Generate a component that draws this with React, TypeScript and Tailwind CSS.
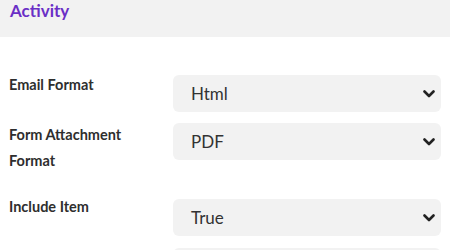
const font = { fontFamily: 'Lato, "Noto Sans", sans-serif' };

function Chevron() {
  return (
    <svg width="12" height="8" viewBox="0 0 12 8" className="shrink-0">
      <polyline points="1.5,1.5 6,6 10.5,1.5" fill="none" stroke="#222" strokeWidth="2.6" strokeLinecap="round" strokeLinejoin="round" />
    </svg>
  );
}

function SelectBox({ value }: { value?: string }) {
  return (
    <div className="w-[268px] h-[37px] bg-[#f2f2f2] rounded-[6px] flex items-center justify-between pl-[18px] pr-[6px]">
      <span className="text-[17px] text-[#333]">{value}</span>
      <Chevron />
    </div>
  );
}

export default function App() {
  return (
    <div style={font} className="w-[450px] h-[250px] bg-white overflow-hidden">
      {/* Section header */}
      <div className="h-[37px] bg-[#f2f2f2] px-[10px]">
        <h2 className="text-[17px] leading-[22px] font-bold text-[#6a2fc6]">Activity</h2>
      </div>

      <div className="flex flex-col pt-[38px]">
        <div className="flex items-start">
          <label className="w-[173px] pl-[9px] mt-[-3px] text-[14.5px] leading-[26px] font-bold text-[#2e2e2e]">Email Format</label>
          <SelectBox value="Html" />
        </div>

        <div className="flex items-start mt-[11px]">
          <label className="w-[173px] pl-[9px] pr-[30px] mt-[-1px] text-[14.5px] leading-[26px] font-bold text-[#2e2e2e]">Form Attachment Format</label>
          <SelectBox value="PDF" />
        </div>

        <div className="flex items-start mt-[25px]">
          <label className="w-[173px] pl-[9px] mt-[-5px] text-[14.5px] leading-[26px] font-bold text-[#2e2e2e]">Include Item</label>
          <SelectBox value="True" />
        </div>

        {/* next row, only its box top is in view */}
        <div className="flex items-start mt-[12px]">
          <div className="w-[173px]" />
          <div className="w-[268px] h-[37px] bg-[#f2f2f2] rounded-[6px]" />
        </div>
      </div>
    </div>
  );
}
